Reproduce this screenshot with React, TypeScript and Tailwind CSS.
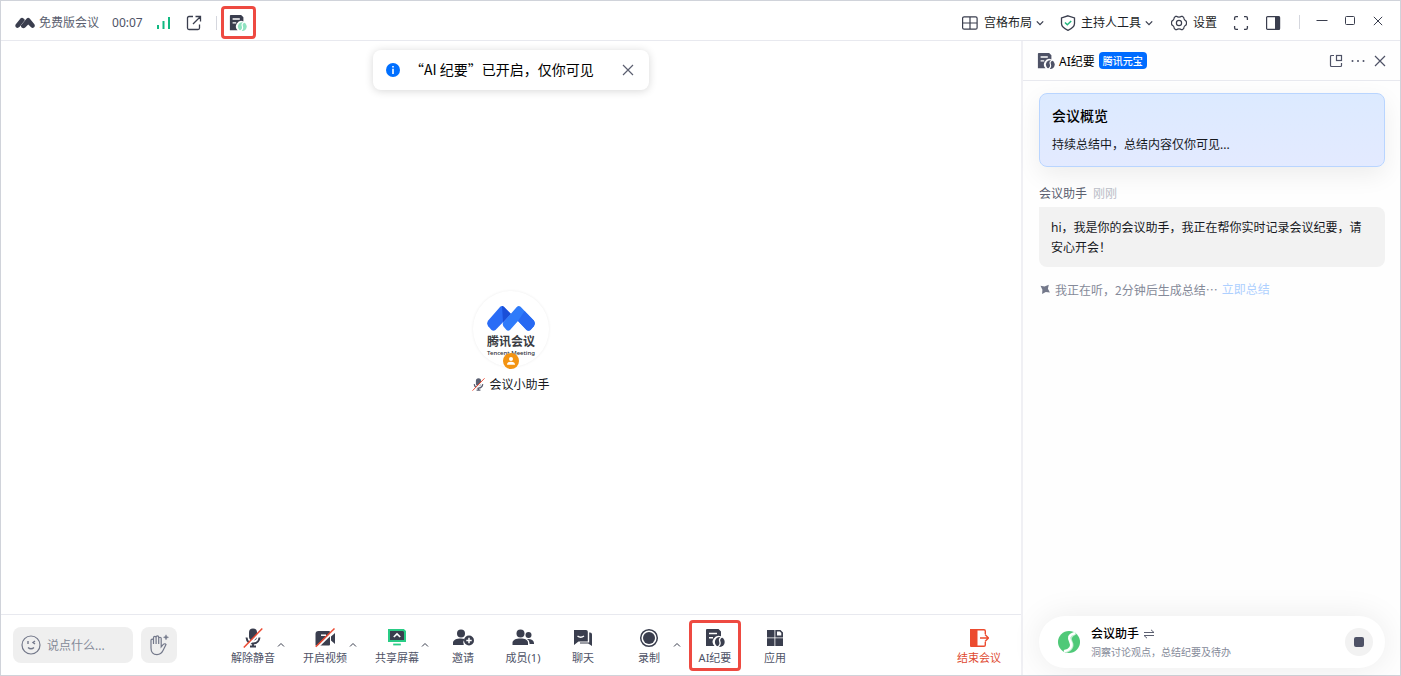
import type { ReactNode } from 'react';

interface ToolItem {
  label: string;
  icon: ReactNode;
  hasMenu?: boolean;
  active?: boolean;
}

function MeetingLogo() {
  return (
    <svg width="20" height="12" viewBox="0 0 20 12" fill="#3a3e4e">
      <path d="M.6 7.500 5.500 1.500q1.500-1.400 3 0L10 3 4.700 9.800Q2.600 11.800.9 10.200q-1-1.200-.3-2.700z" />
      <path d="M6 8.200 11.700 1.500q1.500-1.400 3 0L19.400 7.300q1 1.800-.3 3-1.600 1.200-3-.1L13.200 7.400 10.200 10.600q-1.800 1.200-3.600-.2-1-1-.6-2.200z" />
    </svg>
  );
}

function NotesIcon({ size = 20, color = '#3a3e4e', accent }: { size?: number; color?: string; accent?: string }) {
  return (
    <svg width={size} height={size} viewBox="0 0 20 20" fill="none">
      <path d="M2 1h11.500L16 3.500v4.700a6 6 0 0 0-6.500 9.800H1V2q0-1 1-1z" fill={color} />
      <path d="M4 5.600h8M4 9.800h4" stroke="#fff" strokeWidth="1.500" />
      <circle cx="14.800" cy="14" r="4.900" fill={accent ?? color} />
      <path d="M17 8.800c-3 1.500-2.900 3-2.200 4.700.8 2 .3 4-2.600 5.800" stroke="#fff" strokeWidth="1.300" />
    </svg>
  );
}

function Chevron() {
  return (
    <svg width="8" height="8" viewBox="0 0 8 8" fill="none" stroke="#3a3e4e" strokeWidth="1.300">
      <path d="M.8 2.400 4 5.600l3.200-3.200" />
    </svg>
  );
}

function CloseIcon({ size = 12 }: { size?: number }) {
  return (
    <svg width={size} height={size} viewBox="0 0 12 12" fill="none" stroke="currentColor" strokeWidth="1.200">
      <path d="m1 1 10 10M11 1 1 11" />
    </svg>
  );
}

function MicOffIcon({ size = 20, color = '#3a3e4e' }: { size?: number; color?: string }) {
  return (
    <svg width={size} height={size} viewBox="0 0 20 20" fill="none">
      <rect x="6" y=".5" width="8" height="12" rx="4" fill={color} />
      <path d="M3.500 9.500c.5 4 3 6 6.500 6s6-2 6.500-6M10 15.500V19M7 18.500h6" stroke={color} strokeWidth="2" />
      <path d="M1.800 20.500 20.300 1.500" stroke="#fff" strokeWidth="2" />
      <path d="M.8 19.500 19.300.5" stroke="#ed4b33" strokeWidth="1.500" />
    </svg>
  );
}

function VideoOffIcon() {
  return (
    <svg width="20" height="20" viewBox="0 0 20 20" fill="none">
      <path d="M3.500 3h10.500q1 0 1 1v12.500q0 1-1 1H.5V6Q.5 3 3.500 3z" fill="#3a3e4e" />
      <path d="m16 8.500 4-3.500v11l-4-3.500z" fill="#3a3e4e" />
      <path d="M6 7.200h5" stroke="#fff" strokeWidth="1.500" />
      <path d="M2 19.700 20.300 1.700" stroke="#fff" strokeWidth="2" />
      <path d="M.8 18.700 19.500.5" stroke="#ed4b33" strokeWidth="1.500" />
    </svg>
  );
}

function ShareIcon() {
  return (
    <svg width="20" height="20" viewBox="0 0 20 20" fill="none">
      <path d="M2 2h14.500L18 3.500V13H2z" fill="#3a3e4e" stroke="#29cc85" strokeWidth="2" />
      <path d="m6.800 9 3.200-3 3.200 3" stroke="#fff" strokeWidth="1.700" />
      <path d="M6.200 16.500h7.600" stroke="#29cc85" strokeWidth="1.800" />
    </svg>
  );
}

function InviteIcon() {
  return (
    <svg width="22" height="20" viewBox="0 0 22 20" fill="#3a3e4e">
      <circle cx="9" cy="5.500" r="4" />
      <path d="M1 17v-2.300C1 12 4.500 10.500 9 10.500q2 0 3.500.5a6 6 0 0 0-.7 6z" />
      <circle cx="17" cy="12.500" r="5" />
      <path d="M17 9.800v5.400M14.300 12.500h5.400" stroke="#fff" strokeWidth="1.500" />
    </svg>
  );
}

function MembersIcon() {
  return (
    <svg width="22" height="20" viewBox="0 0 22 20" fill="#3a3e4e">
      <circle cx="8.500" cy="5.500" r="4" />
      <path d="M.5 17v-2.300C.5 12 4 10.500 8.500 10.500s7.500 1.500 7.500 4.200V17z" />
      <circle cx="16.500" cy="7" r="3" />
      <path d="M15 11c4.500-.3 7.300 1.200 7 5h-4.500q.4-3.300-2.500-5z" />
    </svg>
  );
}

function ChatIcon() {
  return (
    <svg width="20" height="20" viewBox="0 0 20 20" fill="#3a3e4e">
      <path d="M1 2h12q1.800 0 1.800 1.800v9.700H5.500L1 17z" />
      <path d="M4.500 8q3.200 2.600 6.500 0" fill="none" stroke="#fff" strokeWidth="1.400" />
      <path d="M16.200 4.500H17q2 0 2 2V18l-3.800-2.500H7v-1h9.200z" />
    </svg>
  );
}

function RecordIcon() {
  return (
    <svg width="20" height="20" viewBox="0 0 20 20">
      <circle cx="10" cy="10" r="8.300" fill="none" stroke="#3a3e4e" strokeWidth="1.500" />
      <circle cx="10" cy="10" r="6" fill="#3a3e4e" />
    </svg>
  );
}

function AppsIcon() {
  return (
    <svg width="20" height="20" viewBox="0 0 20 20" fill="#3a3e4e">
      <path d="M2 2h7.500v7.500H2zM2 10.300h7.500V18H2zM10.300 10.300H18V18h-7.700zM10.300 2h5.200L18 4.500v5h-7.700z" />
      <path d="M12 3.500h2.800l1.500 1.500v2.600H12z" fill="#fff" />
    </svg>
  );
}

function TencentLogo() {
  return (
    <svg width="48" height="27" viewBox="0 0 48 27">
      <path d="M1.200 15.500 13.200 1.800Q15 .2 16.800 1.800L24 9 8.500 25Q6.500 26.500 4.500 25L1.200 21.200Q-.8 18.300 1.200 15.500z" fill="#2a6cf6" />
      <path d="m16 17.500 8-8.500-7.200-7.200Q15.800.9 15 1z" fill="#1a4fd8" />
      <path d="M16 17.500 30 1.800q1.800-1.600 3.600 0L46.800 15.500q2 2.800 0 5.700L43.500 25q-2 1.500-4 0L31 16l-8 9q-2 1.500-3.500 0l-3-3.500q-1.200-2-.5-4z" fill="#2f7bfa" />
      <path d="m31 16 6.500-10 9.300 9.500q2 2.800 0 5.700L43.500 25q-2 1.500-4 0z" fill="#2769f2" />
    </svg>
  );
}

const TOOLS: ToolItem[] = [
  { label: '解除静音', icon: <MicOffIcon />, hasMenu: true },
  { label: '开启视频', icon: <VideoOffIcon />, hasMenu: true },
  { label: '共享屏幕', icon: <ShareIcon />, hasMenu: true },
  { label: '邀请', icon: <InviteIcon /> },
  { label: '成员(1)', icon: <MembersIcon /> },
  { label: '聊天', icon: <ChatIcon /> },
  { label: '录制', icon: <RecordIcon />, hasMenu: true },
  { label: 'AI纪要', icon: <NotesIcon />, active: true },
  { label: '应用', icon: <AppsIcon /> },
];

function ToolButton({ label, icon, hasMenu, active }: ToolItem) {
  return (
    <div className={hasMenu ? 'flex items-center pl-3' : active ? 'flex px-1' : 'flex px-1.5'}>
      <button
        className={`flex h-[51px] flex-col items-center justify-center gap-0.5 pt-1 text-[11px] leading-4 whitespace-nowrap text-[#4e5266] ${
          active ? 'w-[52px] rounded-sm border-3 border-[#ee4a41]' : 'w-12'
        }`}
      >
        {icon}
        {label}
      </button>
      {hasMenu && (
        <button aria-label={`${label}选项`} className="flex w-3 justify-center pr-1">
          <svg width="8" height="6" viewBox="0 0 8 6" fill="none" stroke="#3a3e4e">
            <path d="m1 4.500 3-3 3 3" />
          </svg>
        </button>
      )}
    </div>
  );
}

function TopBar() {
  return (
    <header className="flex h-10 flex-none items-center justify-between border-b border-[#e8e9ef] pr-4 pl-[14px] text-[#3a3e4e]">
      <div className="flex items-center pt-1">
        <MeetingLogo />
        <span className="ml-1 text-[#5b5f70]">免费版会议</span>
        <span className="ml-[13px] text-[#4e5266]">00:07</span>
        <svg className="ml-3.5" width="14" height="14" viewBox="0 0 14 14" fill="#10b981">
          <path d="M0 9h2v4H0zM5.500 5h2v8h-2zM11 1h2v12h-2z" />
        </svg>
        <button aria-label="分享" className="ml-[15px]">
          <svg width="16" height="16" viewBox="0 0 16 16" fill="none" stroke="#3a3e4e" strokeWidth="1.300">
            <path d="M7 1.500H3q-1.500 0-1.500 1.500v10q0 1.500 1.500 1.500h9q1.500 0 1.500-1.500V9.500M9.500 1.500h5v5M14.300 1.700 7 9" />
          </svg>
        </button>
        <span className="ml-3.5 h-3.5 w-px bg-[#d5d7de]" />
        <button aria-label="AI纪要" className="ml-1 flex h-[33px] w-[35px] items-center justify-center rounded-sm border-3 border-[#ee4a41]">
          <NotesIcon size={18} accent="#8fe3c0" />
        </button>
      </div>
      <div className="flex items-center pt-1">
        <button className="flex items-center text-[#1c1e26]">
          <svg className="mr-1.5" width="16" height="14" viewBox="0 0 16 14" fill="none" stroke="#3a3e4e" strokeWidth="1.200">
            <rect x=".6" y=".8" width="14.500" height="12.400" rx="1.500" />
            <path d="M8 1v12M1 7h14" />
          </svg>
          宫格布局
          <span className="ml-1"><Chevron /></span>
        </button>
        <button className="ml-4 flex items-center text-[#1c1e26]">
          <svg className="mr-[5px]" width="16" height="16" viewBox="0 0 16 16" fill="none" strokeWidth="1.300">
            <path d="M8 .8 14.500 3v5.500q0 4-6.500 6.800-6.500-2.800-6.500-6.800V3z" stroke="#3a3e4e" />
            <path d="m5 7.500 2.300 2.300L11.200 6" stroke="#22b77f" strokeWidth="1.500" />
          </svg>
          主持人工具
          <span className="ml-1"><Chevron /></span>
        </button>
        <button className="ml-[18px] flex items-center text-[#1c1e26]">
          <svg className="mr-1.5" width="16" height="16" viewBox="0 0 16 16" fill="none" stroke="#3a3e4e" strokeWidth="1.200">
            <path d="M4.600 1.300h.9Q6.500 2.200 8 2.200t2.500-.9h.9l1.300 1.200q.1 1.600 1.300 2.800l1.200.9q.6 1.800 0 3.600l-1.200.9q-1.200 1.200-1.300 2.800l-1.300 1.200h-.9q-1-.9-2.500-.9t-2.500.9h-.9l-1.300-1.200q-.1-1.600-1.300-2.800L.8 9.800Q.2 8 .8 6.200L2 5.300q1.200-1.200 1.300-2.800z" />
            <circle cx="8" cy="8" r="2.600" />
          </svg>
          设置
        </button>
        <button aria-label="全屏" className="ml-4">
          <svg width="16" height="16" viewBox="0 0 16 16" fill="none" stroke="#3a3e4e" strokeWidth="1.300">
            <path d="M5 1.600H3Q1.600 1.600 1.600 3v2M11 1.600h2q1.400 0 1.400 1.400v2M5 14.400H3q-1.400 0-1.400-1.400v-2M11 14.400h2q1.400 0 1.400-1.400v-2" />
          </svg>
        </button>
        <button aria-label="侧边栏" className="ml-4">
          <svg width="16" height="16" viewBox="0 0 16 16" fill="none">
            <rect x="1.600" y="1.600" width="13" height="12.800" rx="1" stroke="#3a3e4e" strokeWidth="1.200" />
            <path d="M10 1.500h4.500v13H10z" fill="#3a3e4e" />
          </svg>
        </button>
        <span className="ml-[18px] h-3.5 w-px self-start bg-[#d5d7de]" />
        <div className="ml-4 flex items-center gap-4 self-start">
          <button aria-label="最小化">
            <svg width="12" height="12" viewBox="0 0 12 12" stroke="#3a3e4e">
              <path d="M.5 5.500h11" />
            </svg>
          </button>
          <button aria-label="最大化">
            <svg width="12" height="12" viewBox="0 0 12 12" fill="none" stroke="#3a3e4e">
              <rect x="1.500" y="1.500" width="9" height="8" rx="1" />
            </svg>
          </button>
          <button aria-label="关闭" className="flex w-3 justify-center">
            <CloseIcon size={10} />
          </button>
        </div>
      </div>
    </header>
  );
}

function Stage() {
  return (
    <section className="relative flex flex-1 items-center justify-center">
      <div className="absolute top-[9px] left-1/2 flex h-10 w-[276px] -translate-x-1/2 items-center rounded-lg bg-white pr-[15px] pl-[13px] text-sm text-black shadow-[0_1px_8px_rgba(0,0,0,0.16)]">
        <svg width="14" height="14" viewBox="0 0 14 14">
          <circle cx="7" cy="7" r="7" fill="#006fff" />
          <path d="M6.200 3h1.600v1.500H6.200zM6.200 5.800h1.600V11H6.200z" fill="#fff" />
        </svg>
        <p className="ml-2.5 flex-1 pb-0.5 font-['Noto_Sans_CJK_SC',sans-serif] whitespace-nowrap">“AI 纪要”已开启，仅你可见</p>
        <button aria-label="关闭提示" className="text-[#5b5f70]">
          <CloseIcon />
        </button>
      </div>

      <div className="flex flex-col items-center pt-7">
        <div className="relative flex size-[76px] flex-col items-center rounded-full bg-white pt-3.5 shadow-[0_0_3px_rgba(0,0,0,0.08)]">
          <TencentLogo />
          <span className="pt-0.5 text-xs leading-4 font-bold text-[#3a3c42]">腾讯会议</span>
          <span className="text-[6px] leading-[6px] font-medium whitespace-nowrap text-[#2b2d33]">Tencent Meeting</span>
          <span className="absolute -bottom-0.5 left-[30px] flex size-4 items-center justify-center rounded-full bg-[#f39412]">
            <svg width="10" height="10" viewBox="0 0 10 10" fill="#fff">
              <circle cx="5" cy="3" r="2" />
              <path d="M1 8.800q0-3 4-3t4 3z" />
            </svg>
          </span>
        </div>
        <div className="mt-2.5 flex items-center gap-1 leading-4 text-[#16181d]">
          <MicOffIcon size={13} color="#5b6072" />
          会议小助手
        </div>
      </div>
    </section>
  );
}

function Toolbar() {
  return (
    <footer className="flex h-[61px] flex-none items-center border-t border-[#e8e9ef]">
      <div className="flex flex-1 items-center gap-2 pl-3">
        <label className="flex h-9 w-[120px] items-center gap-1.5 rounded-lg bg-[#efefef] pl-2">
          <svg className="flex-none" width="20" height="20" viewBox="0 0 20 20" fill="none" stroke="#73788a" strokeWidth="1.200">
            <circle cx="10" cy="10" r="9" />
            <path d="M7 6v3M14 6l-2 1.500 2 1.500M7 12.500q3 2.600 6 0" strokeWidth="1.400" />
          </svg>
          <input
            aria-label="聊天消息"
            placeholder="说点什么..."
            className="w-full min-w-0 bg-transparent pt-0.5 outline-none placeholder:text-[#858a99]"
          />
        </label>
        <button aria-label="举手" className="flex size-9 items-center justify-center rounded-lg bg-[#efefef]">
          <svg width="20" height="22" viewBox="0 0 20 22" fill="none" stroke="#73788a" strokeWidth="1.200">
            <path d="M2 13V6.300a1.200 1.200 0 0 1 2.500 0V10M4.500 10V3.700a1.300 1.300 0 0 1 2.600 0V10M7.100 10V3.200a1.300 1.300 0 0 1 2.600 0V10M9.700 10V4.500a1.200 1.200 0 0 1 2.500 0v8.300l2.300-2.600q1.600-1.100 2.500.4l-3 6q-1.900 4-6 4Q2 20.600 2 14v-2" />
            <path d="m17 .8.700 1.800 1.800.7-1.800.7-.7 1.800-.7-1.800-1.800-.7 1.800-.7z" fill="#73788a" strokeWidth=".5" />
          </svg>
        </button>
      </div>
      <nav className="flex items-center pl-1.5">
        {TOOLS.map((tool) => (
          <ToolButton key={tool.label} {...tool} />
        ))}
      </nav>
      <div className="flex flex-1 justify-end pr-[18px]">
        <button className="flex h-[51px] w-12 flex-col items-center justify-center gap-0.5 pt-1 text-[11px] leading-4 whitespace-nowrap text-[#e04b32]">
          <svg width="20" height="20" viewBox="0 0 20 20" fill="none" stroke="#ec4b2f" strokeWidth="1.400">
            <path d="M1 1h7.500v18H2q-1 0-1-1z" fill="#ec4b2f" stroke="none" />
            <path d="M8 1.700h7q1.300 0 1.300 1.300v3M8 18.300h7q1.300 0 1.300-1.300v-3M11 10h8M16 6.500l3.500 3.500-3.500 3.500" />
          </svg>
          结束会议
        </button>
      </div>
    </footer>
  );
}

function NotesPanel() {
  return (
    <aside className="flex w-[379px] flex-none flex-col border-l-2 border-[#f0f0f4] bg-[#fefefe]">
      <div className="flex h-10 flex-none items-center border-b border-[#e8e9ef] px-3.5 text-[#4e5266]">
        <NotesIcon size={18} color="#4e5266" />
        <h2 className="ml-1 pt-0.5 text-black">AI纪要</h2>
        <span className="ml-1 h-[17px] rounded-sm bg-[#006cff] px-1 text-[10px] leading-[18px] font-medium text-white">腾讯元宝</span>
        <div className="ml-auto flex items-center">
          <button aria-label="弹出窗口">
            <svg width="14" height="14" viewBox="0 0 14 14" fill="none" stroke="currentColor" strokeWidth="1.200">
              <path d="M5 1.500H2.500q-1 0-1 1v9q0 1 1 1h9q1 0 1-1V9" />
              <rect x="7.500" y="1.500" width="5" height="5" />
            </svg>
          </button>
          <button aria-label="更多" className="ml-2">
            <svg width="14" height="14" viewBox="0 0 14 14" fill="currentColor">
              <circle cx="1.500" cy="7" r="1" />
              <circle cx="7" cy="7" r="1" />
              <circle cx="12.500" cy="7" r="1" />
            </svg>
          </button>
          <button aria-label="关闭面板" className="ml-[9px]">
            <CloseIcon />
          </button>
        </div>
      </div>

      <div className="flex flex-1 flex-col pt-3 pr-[15px] pl-4">
        <div className="rounded-lg border border-[#b9d5ff] bg-linear-to-b from-[#dceaff] to-[#e3eaff] px-3 pt-3 pb-[11px] shadow-[0_8px_24px_rgba(0,0,0,0.07)]">
          <h3 className="text-sm leading-5 font-medium text-black">会议概览</h3>
          <p className="mt-[9px] leading-5 text-[#16181d]">持续总结中，总结内容仅你可见...</p>
        </div>

        <p className="mt-[17px] flex gap-1.5 leading-5 text-[#5b5f70]">
          会议助手 <span className="text-[#b9bcc6]">刚刚</span>
        </p>
        <div className="mt-[3px] rounded-lg rounded-tl-none bg-[#f2f2f2] px-3 pt-[11px] pb-[9px] leading-5 text-[#16181d]">
          hi，我是你的会议助手，我正在帮你实时记录会议纪要，请安心开会！
        </div>
        <p className="mt-[13px] flex items-center gap-1 leading-5 text-[#858a99]">
          <svg width="12" height="12" viewBox="0 0 12 12" fill="#73788a">
            <path d="m1.500 1.800 4 .8 4.300-1.800-.9 4 2 3.800-4.100-.7-3.700 2.100.3-4.200z" />
          </svg>
          <span className="font-['Noto_Sans_CJK_SC',sans-serif]">我正在听，2分钟后生成总结…</span>
          <a href="#summary" className="text-[#aed0ff]">立即总结</a>
        </p>

        <div className="mt-auto mb-[7px] flex h-[52px] items-center rounded-full bg-white pr-3 pl-[18px] shadow-[0_0_32px_rgba(0,0,0,0.08)]">
          <svg width="24" height="24" viewBox="0 0 24 24" fill="none">
            <circle cx="12" cy="12" r="11" fill="#4fc978" />
            <path d="M19 3.500c-6 3-5.500 5.500-4 8.500 2 4.500 0 8.500-6.500 10.500" stroke="#b9ebca" strokeWidth="1.500" />
            <path d="M18 3c-7 2-6.500 5.500-4.500 9 2.200 4 0 8-6.500 9.300" stroke="#fff" strokeWidth="2.600" />
          </svg>
          <div className="ml-2.5 flex-1 pt-0.5">
            <div className="flex items-center gap-1 leading-[18px] font-medium text-black">
              会议助手
              <button aria-label="切换助手">
                <svg width="12" height="10" viewBox="0 0 12 10" fill="none" stroke="#5b5f70">
                  <path d="M1 3.500h10L8 .8M11 6.500H1l3 2.700" />
                </svg>
              </button>
            </div>
            <p className="text-[10px] leading-[18px] text-[#858a99]">洞察讨论观点，总结纪要及待办</p>
          </div>
          <button aria-label="停止" className="flex size-7 items-center justify-center rounded-full bg-[#f2f2f2]">
            <span className="size-2.5 rounded-xs bg-[#4e5266]" />
          </button>
        </div>
      </div>
    </aside>
  );
}

export default function App() {
  return (
    <div className="flex min-h-screen flex-col border border-[#d0d3da] bg-white font-['Noto_Sans','Noto_Sans_CJK_SC',sans-serif] text-xs">
      <TopBar />
      <div className="flex flex-1">
        <main className="flex min-w-0 flex-1 flex-col">
          <Stage />
          <Toolbar />
        </main>
        <NotesPanel />
      </div>
    </div>
  );
}
